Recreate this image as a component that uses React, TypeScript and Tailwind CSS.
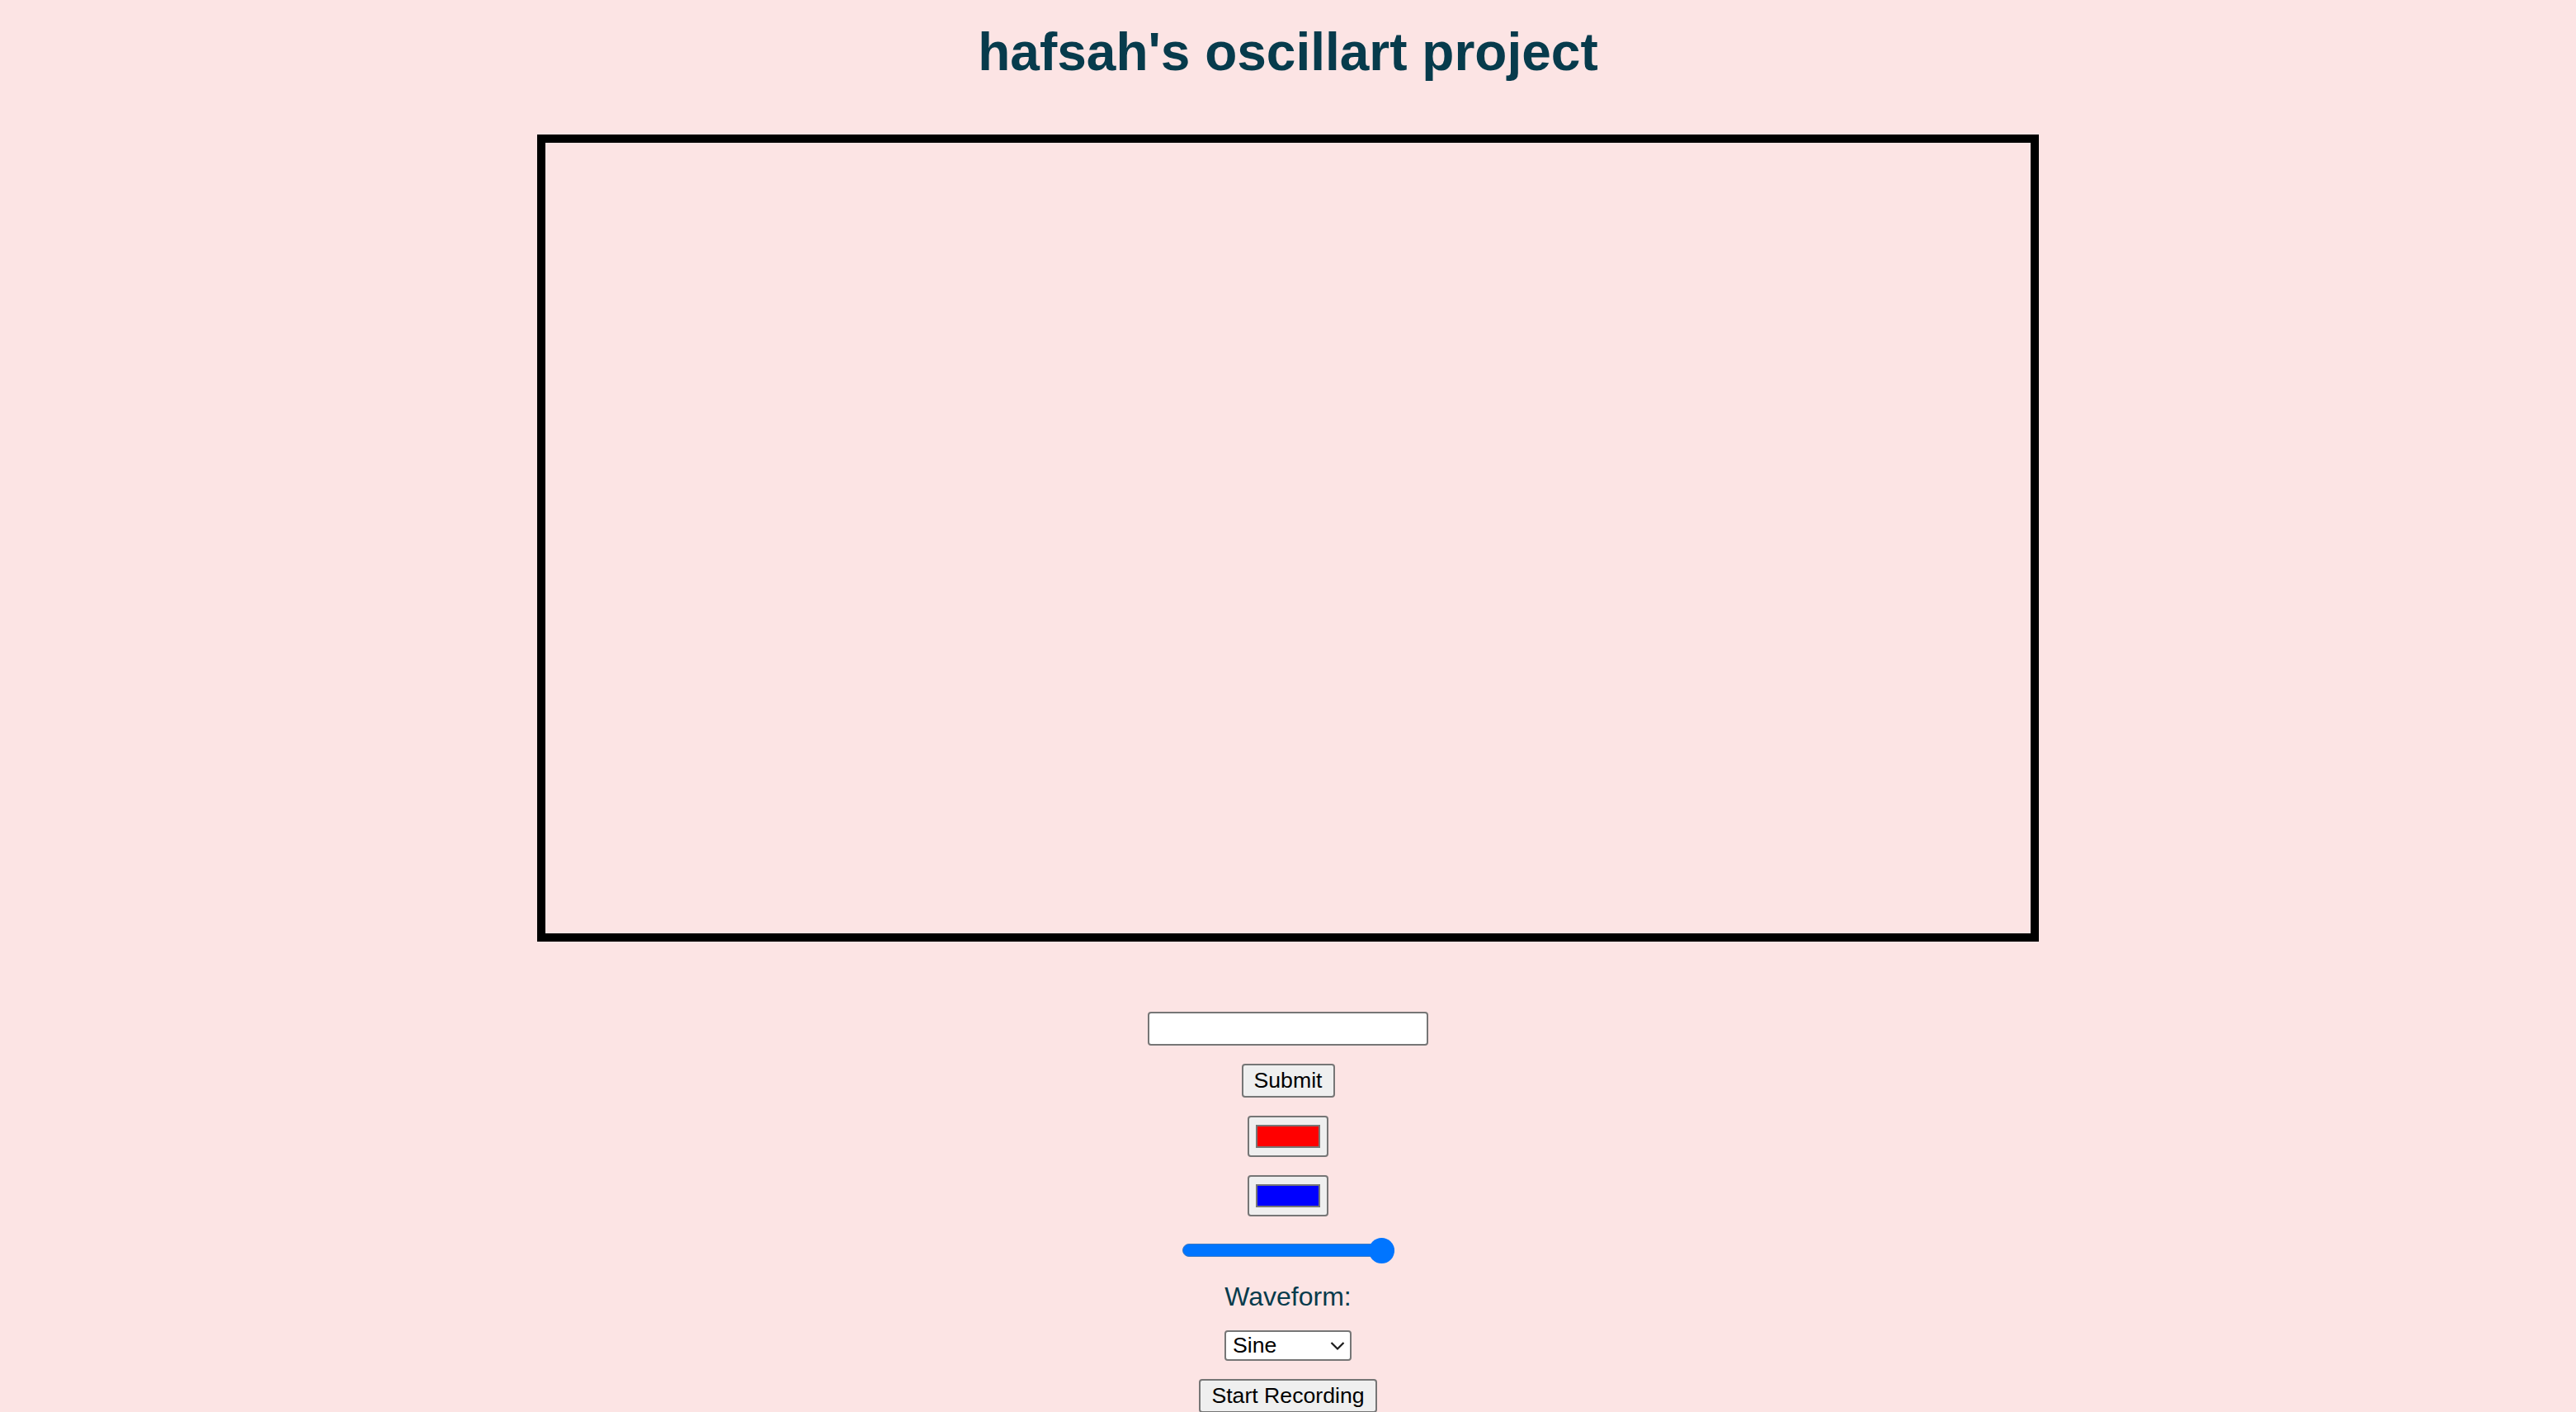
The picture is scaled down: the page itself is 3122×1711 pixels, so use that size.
import React, { useState } from 'react';

const FONT = "font-['Liberation_Sans',Arial,sans-serif]";

type ColorSwatchProps = {
  /** Swatch colour class */
  colorClass: string;
  /** Accessible label */
  label: string;
};

const ColorSwatch: React.FC<ColorSwatchProps> = ({ colorClass, label }) => (
  <button
    type="button"
    aria-label={label}
    className="flex h-[50px] w-[98px] items-center justify-center rounded-[4px] border-2 border-[#767676] bg-[#efefef]"
  >
    <span className={`block h-[28px] w-[78px] border-2 border-[#767676] ${colorClass}`} />
  </button>
);

const Slider: React.FC = () => (
  <div className="mt-[3px] flex h-[32px] w-[257px] items-center" role="slider" aria-valuenow={100}>
    {/* Track */}
    <div className="h-[16px] w-full rounded-full border border-[#3f7ac2] bg-[#0075ff]" />
    {/* Thumb */}
    <div className="-ml-[31px] h-[31px] w-[31px] shrink-0 rounded-full bg-[#0075ff]" />
  </div>
);

export default function App() {
  const [text, setText] = useState('');
  const [wave, setWave] = useState('sine');

  return (
    <div className={`flex min-h-[1711px] w-full flex-col items-center overflow-hidden bg-[#fce4e4] ${FONT}`}>
      <h1 className="pt-[26px] text-[64px] font-bold leading-[74px] text-[#073b4c]">
        hafsah's oscillart project
      </h1>

      {/* Canvas */}
      <div className="mt-[63px] h-[978px] w-[1820px] shrink-0 border-[10px] border-black" />

      {/* Controls */}
      <div className="mt-[85px] flex flex-col items-center gap-[22px]">
        <input
          type="text"
          value={text}
          onChange={(e) => setText(e.target.value)}
          className="h-[41px] w-[340px] rounded-[4px] border-2 border-[#767676] bg-white px-[4px] text-[26.67px] text-black outline-none"
        />
        <button
          type="button"
          className="h-[41px] w-[113px] rounded-[4px] border-2 border-[#767676] bg-[#efefef] text-[26.67px] leading-none text-black"
        >
          Submit
        </button>
        <ColorSwatch colorClass="bg-[#ff0000]" label="Colour 1" />
        <ColorSwatch colorClass="bg-[#0000ff]" label="Colour 2" />
        <Slider />
        <label className="text-[32px] leading-[37px] text-[#073b4c]">Waveform:</label>
        <div className="relative h-[37px] w-[154px]">
          <select
            value={wave}
            onChange={(e) => setWave(e.target.value)}
            className="h-full w-full appearance-none rounded-[4px] border-2 border-[#767676] bg-white pl-[8px] text-[26.67px] leading-none text-black outline-none"
          >
            <option value="sine">Sine</option>
            <option value="square">Square</option>
            <option value="sawtooth">Sawtooth</option>
            <option value="triangle">Triangle</option>
          </select>
          <svg
            className="pointer-events-none absolute right-[8px] top-[13px] h-[12px] w-[18px]"
            viewBox="0 0 18 12"
            fill="none"
            stroke="#1a1a1a"
            strokeWidth="2.2"
          >
            <path d="M1.5 2 L9 9.5 L16.5 2" />
          </svg>
        </div>
        <button
          type="button"
          className="h-[41px] w-[216px] shrink-0 rounded-[4px] border-2 border-[#767676] bg-[#efefef] text-[26.67px] leading-none text-black"
        >
          Start Recording
        </button>
      </div>
    </div>
  );
}
